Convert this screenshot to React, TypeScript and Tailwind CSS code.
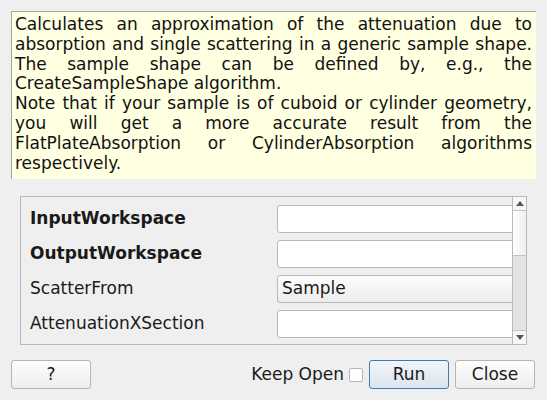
import React from 'react';

const font = { fontFamily: '"DejaVu Sans", Verdana, sans-serif' };

const Field = ({ label, bold, value, combo }: { label: string; bold?: boolean; value?: string; combo?: boolean }) => (
  <div className="flex items-center h-[28px] shrink-0">
    <div className={`w-[256px] shrink-0 pl-[9px] text-[17px] text-[#1a1a1a] ${bold ? 'font-bold' : ''}`}>{label}</div>
    <div
      className={`w-[250px] shrink-0 h-[28px] rounded-[3px] border border-[#b9b9b9] flex items-center pl-[4px] text-[17px] text-[#1a1a1a] ${
        combo ? 'bg-gradient-to-b from-[#fdfdfd] to-[#ececec]' : 'bg-white'
      }`}
    >
      {value}
    </div>
  </div>
);

const Btn = ({ children, primary }: { children: React.ReactNode; primary?: boolean }) => (
  <button
    className={`w-[80px] h-[29px] rounded-[3px] border text-[17px] text-[#1a1a1a] flex items-center justify-center ${
      primary
        ? 'border-[#3c7ab0] bg-gradient-to-b from-[#f1f5f9] to-[#dbe4ed]'
        : 'border-[#b5b5b5] bg-gradient-to-b from-[#fdfdfd] to-[#eeeeee]'
    }`}
  >
    {children}
  </button>
);

export default function App() {
  return (
    <div className="w-[547px] h-[400px] bg-[#efefef] flex flex-col overflow-hidden" style={font}>
      <div className="mt-[11px] ml-[11px] w-[525px] h-[168px] bg-[#ffffe1] border-t border-l border-[#a4a4a4] pl-[3px] pr-[4px] pt-[3px] text-[17px] leading-[19.8px] text-[#111] text-justify">
        Calculates an approximation of the attenuation due to absorption and single scattering in a generic sample shape.
        The sample shape can be defined by, e.g., the CreateSampleShape algorithm.
        <br />
        Note that if your sample is of cuboid or cylinder geometry, you will get a more accurate result from the
        FlatPlateAbsorption or CylinderAbsorption algorithms respectively.
      </div>

      <div className="mt-[17px] ml-[20px] w-[507px] h-[149px] border border-[#b9b9b9] flex">
        <div className="flex-1 overflow-hidden flex flex-col gap-[7px] pt-[8px]">
          <Field label="InputWorkspace" bold />
          <Field label="OutputWorkspace" bold />
          <Field label="ScatterFrom" value="Sample" combo />
          <Field label="AttenuationXSection" />
        </div>
        <div className="w-[14px] border-l border-[#b9b9b9] flex flex-col bg-[#e3e3e3]">
          <div className="h-[14px] border-b border-[#c4c4c4] bg-[#f6f6f6] flex items-center justify-center">
            <svg width="8" height="5" viewBox="0 0 8 5">
              <path d="M0 5 L4 0 L8 5 Z" fill="#555" />
            </svg>
          </div>
          <div className="h-[45px] border-b border-[#c4c4c4] bg-gradient-to-r from-[#ffffff] to-[#efefef]" />
          <div className="flex-1" />
          <div className="h-[14px] border-t border-[#c4c4c4] bg-[#f6f6f6] flex items-center justify-center">
            <svg width="8" height="5" viewBox="0 0 8 5">
              <path d="M0 0 L8 0 L4 5 Z" fill="#555" />
            </svg>
          </div>
        </div>
      </div>

      <div className="mt-[15px] ml-[11px] mr-[12px] flex items-center">
        <Btn>?</Btn>
        <div className="flex-1" />
        <span className="text-[17px] text-[#1a1a1a]">Keep Open</span>
        <span className="ml-[5px] w-[14px] h-[14px] bg-white border border-[#b5b5b5] rounded-[2px]" />
        <div className="ml-[6px]">
          <Btn primary>Run</Btn>
        </div>
        <div className="ml-[6px]">
          <Btn>Close</Btn>
        </div>
      </div>
    </div>
  );
}
